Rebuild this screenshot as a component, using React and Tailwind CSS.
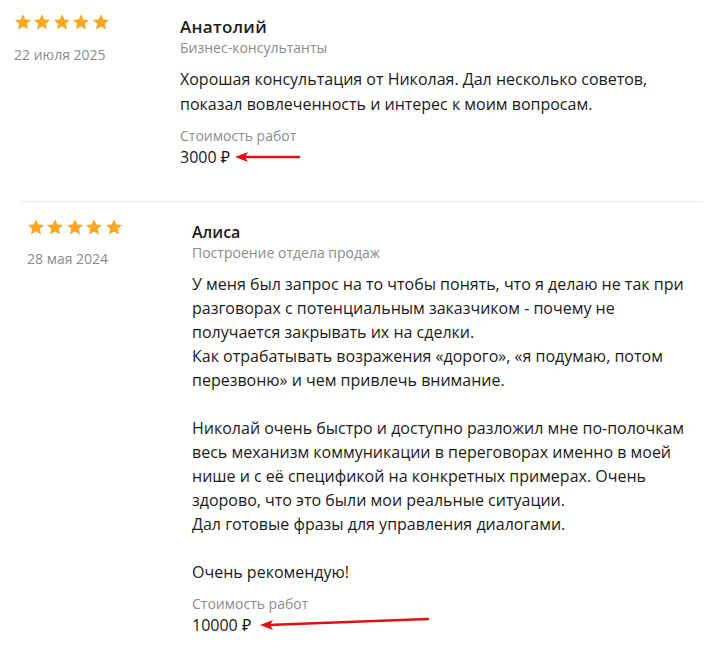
import React from "react";

function Star() {
  return (
    <svg width="18" height="18" viewBox="0 0 24 24" className="shrink-0">
      <path
        d="M12 1.5l3.2 7 7.6.8-5.7 5.1 1.6 7.5L12 18l-6.7 3.9 1.6-7.5L1.2 9.3l7.6-.8z"
        fill="#f9a825"
      />
    </svg>
  );
}

function Stars() {
  return (
    <div className="flex gap-[1.4px]">
      {[0, 1, 2, 3, 4].map((i) => (
        <Star key={i} />
      ))}
    </div>
  );
}

function Arrow({ width, rise = 0 }) {
  const h = 12;
  const mid = h / 2;
  return (
    <svg width={width} height={h} viewBox={`0 0 ${width} ${h}`} className="overflow-visible">
      <line
        x1="8"
        y1={mid}
        x2={width}
        y2={mid - rise}
        stroke="#e01010"
        strokeWidth="2.6"
        strokeLinecap="round"
      />
      <path d={`M0 ${mid} L13 ${mid - 5} L10 ${mid} L13 ${mid + 5} Z`} fill="#e01010" />
    </svg>
  );
}

const reviews = [
  {
    date: "22 июля 2025",
    name: "Анатолий",
    topic: "Бизнес-консультанты",
    lines: [
      "Хорошая консультация от Николая. Дал несколько советов,",
      "показал вовлеченность и интерес к моим вопросам.",
    ],
    price: "3000 ₽",
  },
  {
    date: "28 мая 2024",
    name: "Алиса",
    topic: "Построение отдела продаж",
    lines: [
      "У меня был запрос на то чтобы понять, что я делаю не так при",
      "разговорах с потенциальным заказчиком - почему не",
      "получается закрывать их на сделки.",
      "Как отрабатывать возражения «дорого», «я подумаю, потом",
      "перезвоню» и чем привлечь внимание.",
      "",
      "Николай очень быстро и доступно разложил мне по-полочкам",
      "весь механизм коммуникации в переговорах именно в моей",
      "нише и с её спецификой на конкретных примерах. Очень",
      "здорово, что это были мои реальные ситуации.",
      "Дал готовые фразы для управления диалогами.",
      "",
      "Очень рекомендую!",
    ],
    price: "10000 ₽",
  },
];

export default function App() {
  const first = reviews[0];
  const second = reviews[1];
  return (
    <div className="w-[711px] h-[647px] bg-white overflow-hidden text-[#1b1b1b]" style={{ fontFamily: '"Open Sans", "Noto Sans", sans-serif' }}>
      {/* first review */}
      <div className="flex pl-[14px] pt-[13px] pb-[33px]">
        <div className="w-[166px] shrink-0">
          <Stars />
          <div className="mt-[13px] text-[14px] leading-[21px] text-[#8a8a8a]">{first.date}</div>
        </div>
        <div className="pt-[4px]">
          <div className="text-[17px] font-semibold leading-[20px] tracking-[0.3px]">{first.name}</div>
          <div className="mt-[2px] text-[14px] text-[#8c8c8c] leading-[18px]">{first.topic}</div>
          <div className="mt-[10px] text-[16px] leading-[25px]">
            {first.lines.map((l, i) => (
              <div key={i} className="whitespace-nowrap">{l}</div>
            ))}
          </div>
          <div className="mt-[9px] text-[14px] text-[#8c8c8c] leading-[20px]">Стоимость работ</div>
          <div className="flex items-center gap-[5px] text-[16px] leading-[22px]">
            <span>{first.price}</span>
            <Arrow width={64} />
          </div>
        </div>
      </div>

      {/* divider */}
      <div className="ml-[20px] mr-[8px] h-px bg-[#ebebeb]" />

      {/* second review */}
      <div className="flex pl-[27px]">
        <div className="w-[165px] shrink-0 pt-[16px]">
          <Stars />
          <div className="mt-[12px] text-[14px] leading-[21px] text-[#8a8a8a]">{second.date}</div>
        </div>
        <div className="pt-[20px]">
          <div className="text-[16px] font-semibold leading-[20px]">{second.name}</div>
          <div className="mt-[2px] text-[14px] text-[#8c8c8c] leading-[18px]">{second.topic}</div>
          <div className="mt-[10px] text-[16px] leading-[24px]">
            {second.lines.map((l, i) => (
              <div key={i} className="whitespace-nowrap h-[24px]">{l}</div>
            ))}
          </div>
          <div className="mt-[10px] text-[14px] text-[#8c8c8c] leading-[20px]">Стоимость работ</div>
          <div className="flex items-center gap-[9px] text-[16px] leading-[22px]">
            <span>{second.price}</span>
            <Arrow width={168} rise={6} />
          </div>
        </div>
      </div>
    </div>
  );
}
